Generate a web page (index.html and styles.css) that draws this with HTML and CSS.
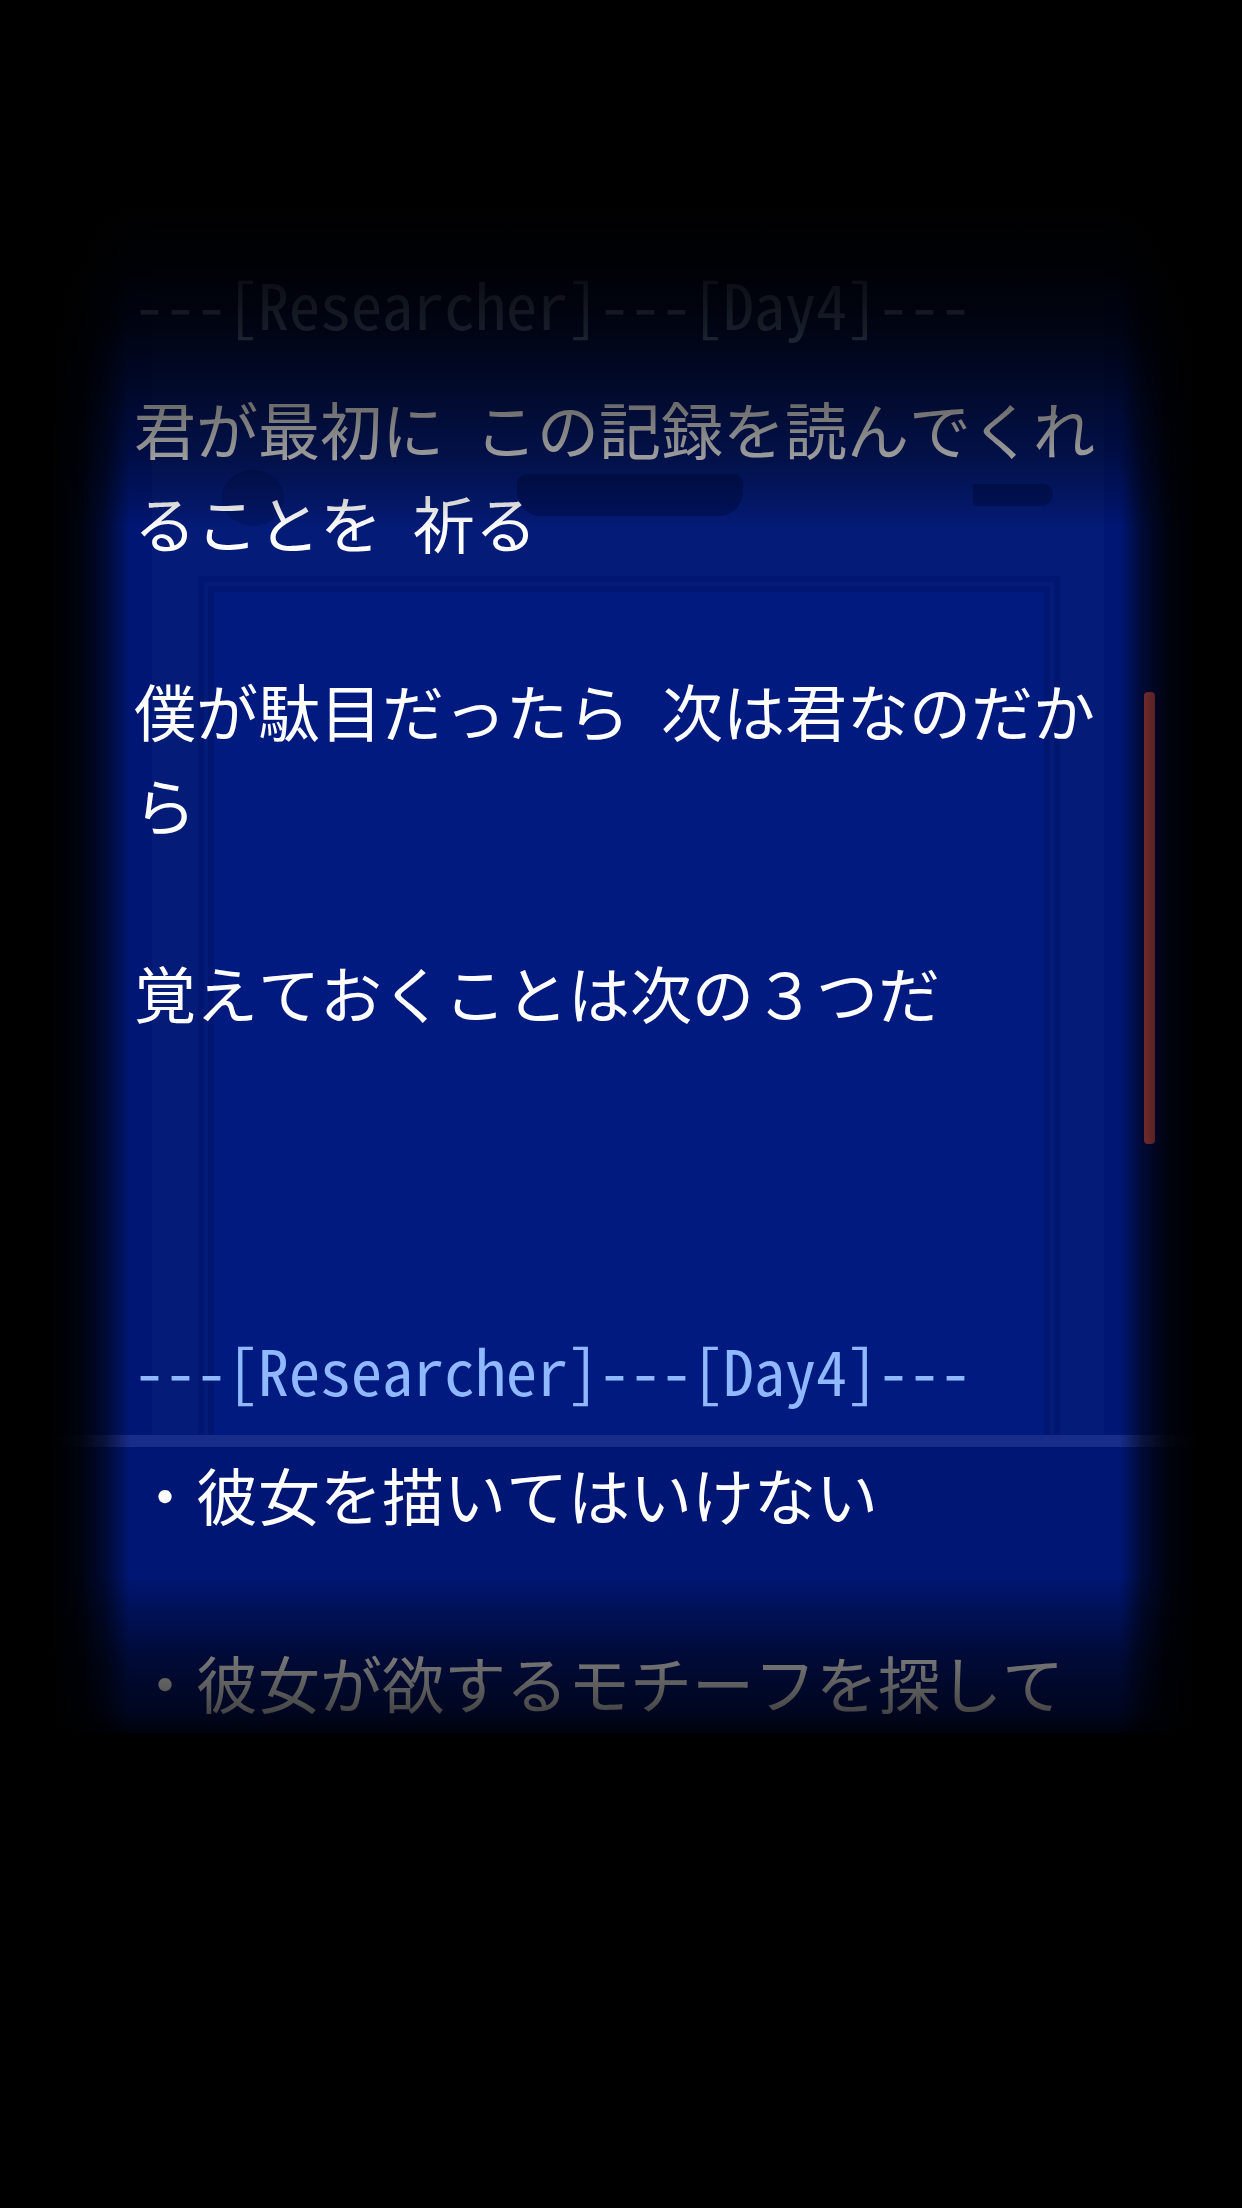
FILE: index.html
```
<!DOCTYPE html>
<html lang="ja">
<head>
<meta charset="utf-8">
<meta name="viewport" content="width=device-width, initial-scale=1">
<title>Researcher Day4</title>
<link rel="stylesheet" href="styles.css">
</head>
<body>
<main class="screen">
  <div class="backdrop" aria-hidden="true">
    <div class="casing"></div>
    <div class="blot blot-oval"></div>
    <div class="blot blot-wide"></div>
    <div class="blot blot-small"></div>
    <div class="monitor"></div>
    <div class="floor"></div>
  </div>
  <div class="log">
    <article class="entry">
      <h2 class="entry-title">---[Researcher]---[Day4]---</h2>
      <div class="entry-body">
        <p>君が最初に この記録を読んでくれることを 祈る</p>
        <p>僕が駄目だったら 次は君なのだから</p>
        <p>覚えておくことは次の３つだ</p>
      </div>
    </article>
    <article class="entry">
      <h2 class="entry-title">---[Researcher]---[Day4]---</h2>
      <div class="entry-body">
        <p>・彼女を描いてはいけない</p>
        <p>・彼女が欲するモチーフを探して</p>
      </div>
    </article>
  </div>
  <div class="shade" aria-hidden="true"></div>
  <div class="scrollbar" aria-hidden="true"></div>
</main>
</body>
</html>
```
FILE: styles.css
```
* { box-sizing: border-box; }

body {
  margin: 0;
  background: #000;
  color: #fff;
  font-family: "Noto Sans Mono CJK JP", "Noto Sans CJK JP", sans-serif;
  font-size: 62px;
  line-height: 94px;
}

h2, p { margin: 0; font-weight: 400; font-size: inherit; }

.screen {
  position: relative;
  padding: 256px 136px 4px 134px;
}

/* Dim blue room behind the log, dissolving at both sides */
.backdrop {
  position: absolute;
  inset: 0;
  overflow: hidden;
  background: #001674;
  -webkit-mask-image: linear-gradient(to right, transparent 48px, rgba(0,0,0,.12) 80px, rgba(0,0,0,.45) 106px, #000 130px, #000 calc(100% - 122px), rgba(0,0,0,.45) calc(100% - 100px), rgba(0,0,0,.12) calc(100% - 74px), transparent calc(100% - 44px));
  mask-image: linear-gradient(to right, transparent 48px, rgba(0,0,0,.12) 80px, rgba(0,0,0,.45) 106px, #000 130px, #000 calc(100% - 122px), rgba(0,0,0,.45) calc(100% - 100px), rgba(0,0,0,.12) calc(100% - 74px), transparent calc(100% - 44px));
}

.casing {
  position: absolute;
  inset: 0 138px 0 152px;
  background: #041b77;
}

/* Screen bezel: two dark bands around the brighter glass */
.monitor {
  position: absolute;
  inset: 576px 182px 0 198px;
  padding: 4px;
  border: 6px solid #001670;
  background: linear-gradient(#001a7f, #001a7f) content-box, #041b77;
}

.monitor::before {
  content: "";
  display: block;
  height: 100%;
  border: 6px solid #001670;
}

.blot { position: absolute; background: #00125f; }
.blot-oval { left: 222px; top: 470px; width: 62px; height: 56px; border-radius: 50%; background: #021668; }
.blot-wide { left: 517px; top: 474px; width: 226px; height: 42px; border-radius: 10px 10px 24px 24px; }
.blot-small { right: 189px; top: 484px; width: 80px; height: 22px; border-radius: 2px 16px 20px 2px; }

.floor {
  position: absolute;
  inset: 1435px 0 0;
  border-top: 12px solid #182c8a;
  background: #001674;
}

.log {
  position: relative;
  display: flex;
  flex-direction: column;
  gap: 95px;
}

.entry { display: flex; flex-direction: column; gap: 31px; }

.entry-title { color: #90b8ff; }

.entry-body {
  display: flex;
  flex-direction: column;
  gap: 94px;
  padding-bottom: 188px;
}

.entry:last-child .entry-body { padding-bottom: 0; }

/* Log text fades out above and below the reading area */
.shade {
  position: absolute;
  inset: 0;
  background:
    linear-gradient(#000 200px, rgba(0,0,0,.96) 260px, rgba(0,0,0,.84) 330px, rgba(0,0,0,.58) 405px, rgba(0,0,0,.38) 460px, rgba(0,0,0,.16) 502px, transparent 528px),
    linear-gradient(to top, rgba(0,0,0,.9) 0, rgba(0,0,0,.72) 22px, rgba(0,0,0,.54) 74px, rgba(0,0,0,.25) 122px, transparent 158px);
}

.scrollbar {
  position: absolute;
  top: 692px;
  right: 87px;
  width: 11px;
  height: 452px;
  border-radius: 4px;
  background: linear-gradient(to right, #6e2a2c, #5a2224);
}
```
